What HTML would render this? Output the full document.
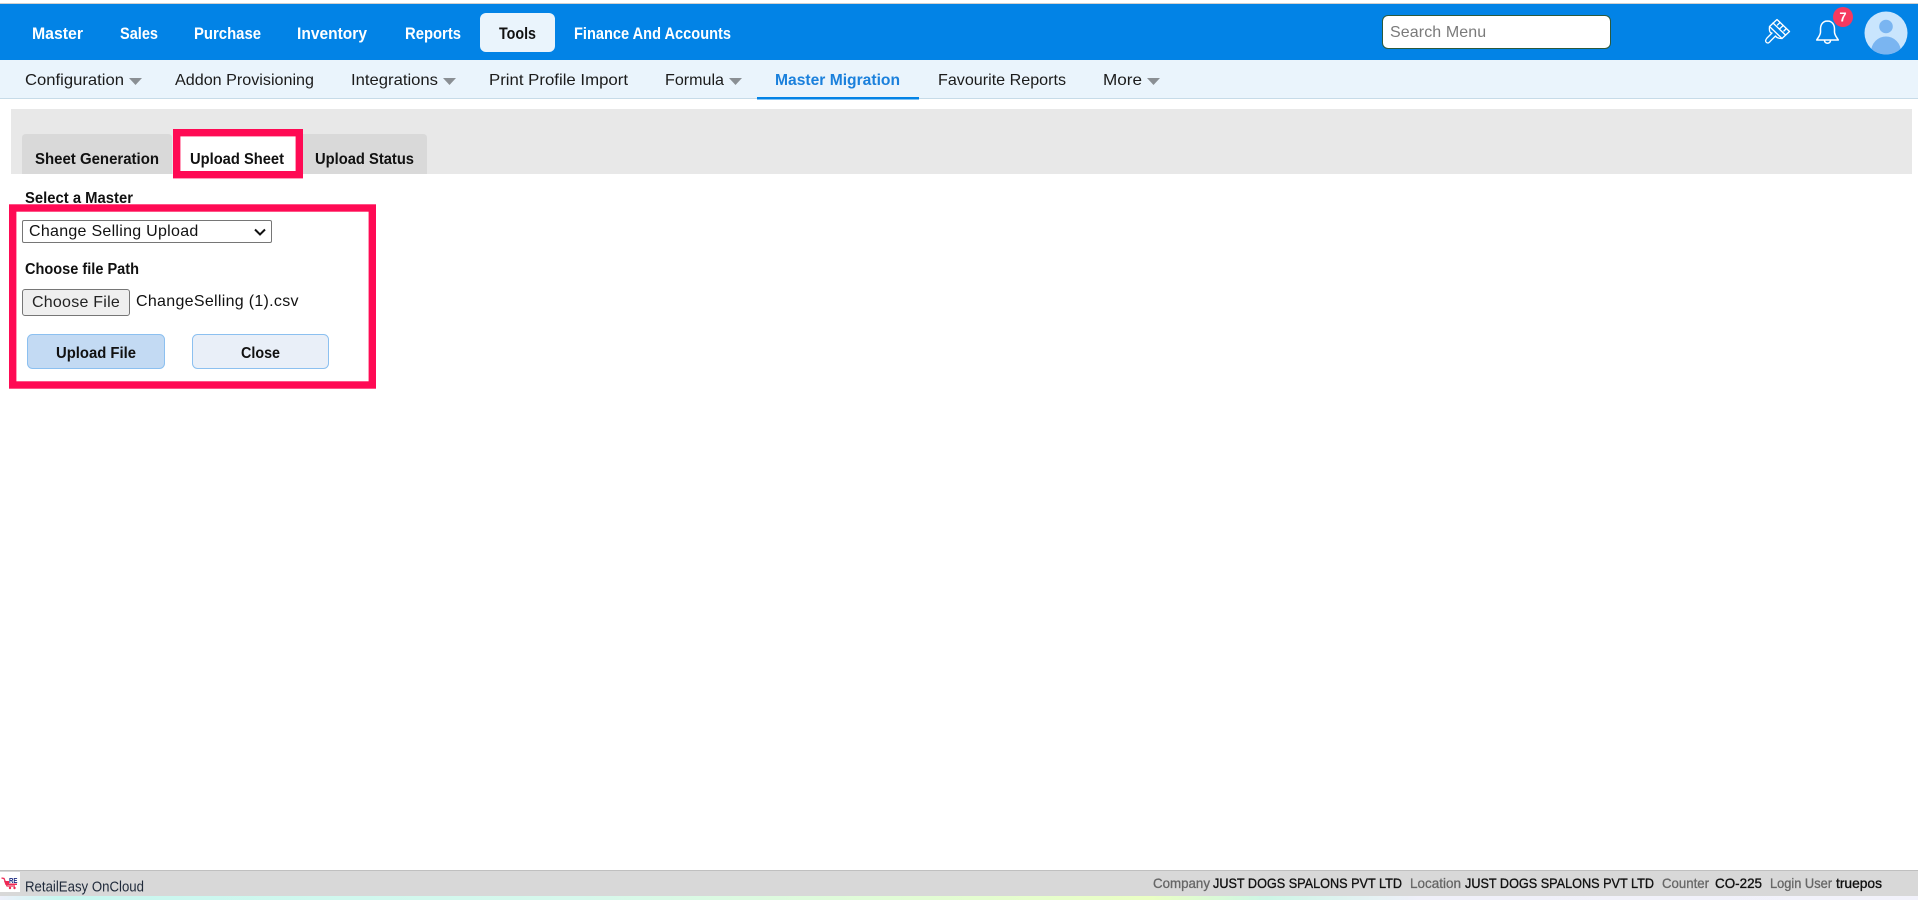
<!DOCTYPE html>
<html lang="en"><head><meta charset="utf-8"><title>RetailEasy OnCloud</title>
<style>
html,body{margin:0;padding:0;width:1918px;height:900px;overflow:hidden;background:#fff}
svg.page{position:absolute;left:0;top:0}
svg.over{position:absolute;left:0;top:0;pointer-events:none}
svg text{font-family:"Liberation Sans",Arial,sans-serif}
.t{font-size:16.5px;font-weight:700;fill:#fff}
.s{font-size:16px;fill:#1b1b1b}
.b{font-size:16px;font-weight:700;fill:#111}
.f{font-size:14px;font-weight:400;fill:#666;stroke:#666;stroke-width:.3}
.k{font-size:14px;font-weight:400;fill:#111;stroke:#111;stroke-width:.35}
#search{position:absolute;left:1382px;top:15px;width:229px;height:34px;box-sizing:border-box;border:1px solid #2c5a3c;border-radius:6px;padding:2px 7px 0;font:16px "Liberation Sans",Arial,sans-serif;background:#fff;outline:0;letter-spacing:.1px}
#search::placeholder{color:#7a7a7a}
#master{position:absolute;left:22px;top:220px;width:250px;height:23px;box-sizing:border-box;font:16px "Liberation Sans",Arial,sans-serif;letter-spacing:.28px;color:#111;background:#fff;border:1px solid #767676;border-radius:2px;padding:0 0 0 6px;appearance:none;-webkit-appearance:none}
#fbtn{position:absolute;left:22px;top:289px;width:108px;height:27px;box-sizing:border-box;font:16px "Liberation Sans",Arial,sans-serif;letter-spacing:.25px;color:#222;background:#efefef;border:1px solid #767676;border-radius:3px;padding:0}
#fname{position:absolute;left:136px;top:292px;font:16px/20px "Liberation Sans",Arial,sans-serif;letter-spacing:.3px;color:#111;white-space:nowrap}
</style></head><body>
<svg class="page" width="1918" height="900" viewBox="0 0 1918 900" xmlns="http://www.w3.org/2000/svg">
<defs>
<linearGradient id="fg" x1="0" x2="1" y1="0" y2="0">
<stop offset="0" stop-color="#eef0fa"/><stop offset=".03" stop-color="#c8f7f0"/><stop offset=".3" stop-color="#d6f8ec"/><stop offset=".6" stop-color="#eaffc4"/><stop offset=".66" stop-color="#cdf6e6"/><stop offset=".74" stop-color="#f0f0fa"/><stop offset="1" stop-color="#f2f2fb"/>
</linearGradient>
<clipPath id="av"><circle cx="1886" cy="33" r="21.500"/></clipPath>
</defs>

<!-- top bar -->
<rect x="0" y="3" width="1918" height="1.200" fill="#d0d0d0"/>
<rect x="0" y="4" width="1918" height="56" fill="#0283e6"/>
<rect x="480" y="13" width="75" height="39" rx="6" fill="#eaf4fc"/>
<text class="t" x="32" y="39" textLength="51" lengthAdjust="spacingAndGlyphs">Master</text>
<text class="t" x="120" y="39" textLength="38" lengthAdjust="spacingAndGlyphs">Sales</text>
<text class="t" x="194" y="39" textLength="67" lengthAdjust="spacingAndGlyphs">Purchase</text>
<text class="t" x="297" y="39" textLength="70" lengthAdjust="spacingAndGlyphs">Inventory</text>
<text class="t" x="405" y="39" textLength="56" lengthAdjust="spacingAndGlyphs">Reports</text>
<text class="t" x="499" y="39" textLength="37" lengthAdjust="spacingAndGlyphs" style="fill:#111">Tools</text>
<text class="t" x="574" y="39" textLength="157" lengthAdjust="spacingAndGlyphs">Finance And Accounts</text>

<!-- brush icon -->
<g fill="none" stroke="#fff" stroke-width="1.300" stroke-linejoin="round" stroke-linecap="round">
<path d="M1777 19.500L1789.500 31.500L1782 38.500L1769.500 26.500Z"/>
<path d="M1773 23L1785.500 35M1780 22.500L1777.500 25M1783.200 25.500L1780 28.500M1786.400 28.500L1783.900 31"/>
<path d="M1769.500 27C1769 31 1770 33 1772 33L1767 38Q1764.500 41 1766.500 42.500Q1768.500 44 1770.500 41L1775.500 36Q1777 38.500 1782 38.500"/>
</g>
<!-- bell -->
<g fill="none" stroke="#fff" stroke-width="1.500" stroke-linejoin="round">
<path d="M1827.500 21c-4.500 0-7 3.500-7 8v3c0 3-2 5-3.800 8h21.600c-1.800-3-3.800-5-3.800-8v-3c0-4.500-2.500-8-7-8z"/>
<path d="M1824.500 40.500a3 2.800 0 0 0 6 0"/>
</g>
<circle cx="1843" cy="17" r="10" fill="#f5395f"/>
<text x="1843" y="21.500" text-anchor="middle" style="font-size:13px;font-weight:700;fill:#fff">7</text>
<!-- avatar -->
<circle cx="1886" cy="33" r="21.500" fill="#c9e5fd"/>
<g clip-path="url(#av)" fill="#7ab5f1">
<circle cx="1886" cy="26.500" r="6.800"/>
<ellipse cx="1886" cy="52" rx="15" ry="15.500"/>
</g>

<!-- sub nav -->
<rect x="0" y="60" width="1918" height="38" fill="#eaf4fc"/>
<rect x="0" y="98" width="1918" height="1" fill="#c7dbe8"/>
<text class="s" x="25" y="85" textLength="99" lengthAdjust="spacingAndGlyphs">Configuration</text>
<path d="M129 78h13l-6.500 7z" fill="#8a8f94"/>
<text class="s" x="175" y="85" textLength="139" lengthAdjust="spacingAndGlyphs">Addon Provisioning</text>
<text class="s" x="351" y="85" textLength="87" lengthAdjust="spacingAndGlyphs">Integrations</text>
<path d="M443 78h13l-6.500 7z" fill="#8a8f94"/>
<text class="s" x="489" y="85" textLength="139" lengthAdjust="spacingAndGlyphs">Print Profile Import</text>
<text class="s" x="665" y="85" textLength="59" lengthAdjust="spacingAndGlyphs">Formula</text>
<path d="M729 78h13l-6.500 7z" fill="#8a8f94"/>
<text class="s" x="775" y="85" textLength="125" lengthAdjust="spacingAndGlyphs" style="fill:#1a80dc;font-weight:700">Master Migration</text>
<rect x="757" y="97" width="162" height="2.500" fill="#0283e6"/>
<text class="s" x="938" y="85" textLength="128" lengthAdjust="spacingAndGlyphs">Favourite Reports</text>
<text class="s" x="1103" y="85" textLength="39" lengthAdjust="spacingAndGlyphs">More</text>
<path d="M1147 78h13l-6.500 7z" fill="#8a8f94"/>

<!-- tab band -->
<rect x="11" y="109" width="1901" height="65" fill="#e8e8e8"/>
<path d="M22 174V138q0-4 4-4H168q4 0 4 4V174z" fill="#d9d9d9"/>
<path d="M302 174V134H423q4 0 4 4V174z" fill="#d9d9d9"/>
<text class="b" x="35" y="164" textLength="124" lengthAdjust="spacingAndGlyphs">Sheet Generation</text>
<rect x="176.700" y="132.700" width="122.600" height="42" fill="#fff" stroke="#ff0a54" stroke-width="7.400"/>
<text class="b" x="190" y="164" textLength="94" lengthAdjust="spacingAndGlyphs">Upload Sheet</text>
<text class="b" x="315" y="164" textLength="99" lengthAdjust="spacingAndGlyphs">Upload Status</text>

<!-- form -->
<text class="b" x="25" y="203" textLength="108" lengthAdjust="spacingAndGlyphs">Select a Master</text>
<rect x="12.700" y="208" width="359.600" height="177" fill="#fff" stroke="#ff0a54" stroke-width="7.400"/>
<text class="b" x="25" y="274" textLength="114" lengthAdjust="spacingAndGlyphs">Choose file Path</text>
<rect x="27.500" y="334.500" width="137" height="34" rx="5" fill="#c3daf3" stroke="#8cc0f0"/>
<text class="b" x="56" y="358" textLength="80" lengthAdjust="spacingAndGlyphs">Upload File</text>
<rect x="192.500" y="334.500" width="136" height="34" rx="5" fill="#e9eff8" stroke="#8cc0f0"/>
<text class="b" x="241" y="358" textLength="39" lengthAdjust="spacingAndGlyphs">Close</text>

<!-- footer -->
<rect x="0" y="870" width="1918" height="30" fill="#d8d8d8"/>
<rect x="0" y="870" width="1918" height="1" fill="#bfbfbf"/>
<rect x="0" y="896" width="1918" height="4" fill="url(#fg)"/>
<rect x="0" y="872" width="20" height="20" fill="#fff"/>
<path d="M1.500 878l2.500 .5l3 7.500h8" fill="none" stroke="#ee2a55" stroke-width="1.300"/>
<path d="M4 881h5v4h-3.500z" fill="#ee2a55"/>
<rect x="9" y="883.500" width="8" height="1.500" fill="#ee2a55"/>
<circle cx="10" cy="888" r="1.200" fill="#ee2a55"/><circle cx="14.500" cy="888" r="1.200" fill="#ee2a55"/>
<text x="9" y="883" textLength="8.500" lengthAdjust="spacingAndGlyphs" style="font-size:7px;font-weight:700;fill:#1c2a80">RE</text>
<text x="25" y="891.500" textLength="119" lengthAdjust="spacingAndGlyphs" style="font-size:14.500px;fill:#1f2a3a">RetailEasy OnCloud</text>
<text class="f" x="1153" y="888" textLength="57" lengthAdjust="spacingAndGlyphs">Company</text>
<text class="k" x="1213" y="888" textLength="189" lengthAdjust="spacingAndGlyphs">JUST DOGS SPALONS PVT LTD</text>
<text class="f" x="1410" y="888" textLength="51" lengthAdjust="spacingAndGlyphs">Location</text>
<text class="k" x="1465" y="888" textLength="189" lengthAdjust="spacingAndGlyphs">JUST DOGS SPALONS PVT LTD</text>
<text class="f" x="1662" y="888" textLength="47" lengthAdjust="spacingAndGlyphs">Counter</text>
<text class="k" x="1715" y="888" textLength="47" lengthAdjust="spacingAndGlyphs">CO-225</text>
<text class="f" x="1770" y="888" textLength="62" lengthAdjust="spacingAndGlyphs">Login User</text>
<text class="k" x="1836" y="888" textLength="46" lengthAdjust="spacingAndGlyphs">truepos</text>
</svg>

<input id="search" type="text" placeholder="Search Menu">
<select id="master"><option>Change Selling Upload</option></select>
<button id="fbtn" type="button">Choose File</button>
<span id="fname">ChangeSelling (1).csv</span>
<svg class="over" width="1918" height="900" viewBox="0 0 1918 900" xmlns="http://www.w3.org/2000/svg">
<path d="M255 229.500l5 5l5-5" fill="none" stroke="#111" stroke-width="2"/>
</svg>
</body></html>
